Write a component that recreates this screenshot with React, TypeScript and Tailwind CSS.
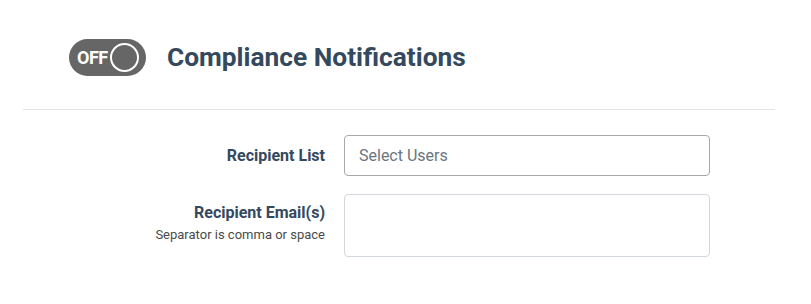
import React from "react";

export default function App() {
  return (
    <div className="w-[811px] h-[304px] bg-white overflow-hidden" style={{ fontFamily: "Roboto, 'Noto Sans', sans-serif" }}>
      <div className="flex items-center pl-[69px] pt-[39px] h-[76px]">
        <div className="relative flex items-center w-[77px] h-[37px] rounded-full bg-[#666666]">
          <span className="ml-[8px] text-white font-bold text-[18px] leading-none tracking-[-0.5px]">OFF</span>
          <span className="ml-[2px] w-[29px] h-[29px] rounded-full border-2 border-white"></span>
        </div>
        <h1 className="ml-[21px] text-[26.3px] font-bold text-[#34495e] leading-none">Compliance Notifications</h1>
      </div>
      <div className="ml-[23px] w-[752px] mt-[33px] border-t border-[#e3e3e3]"></div>
      <div className="mt-[25px] flex flex-col gap-[18px]">
        <div className="flex items-center">
          <div className="w-[325px] text-right text-[16px] font-bold text-[#34495e]">Recipient List</div>
          <div className="ml-[19px] w-[366px] h-[41px] rounded-[4px] border border-[#a9a9a9] flex items-center pl-[14px] text-[16px] text-[#6c757d]">
            Select Users
          </div>
        </div>
        <div className="flex items-start">
          <div className="w-[325px] text-right pt-[9px]">
            <div className="text-[16px] font-bold text-[#34495e] leading-[20px]">Recipient Email(s)</div>
            <div className="mt-[4px] text-[13px] text-[#4a4a4a] leading-[16px]">Separator is comma or space</div>
          </div>
          <div className="ml-[19px] w-[366px] h-[63px] rounded-[4px] border border-[#d3d8de]"></div>
        </div>
      </div>
    </div>
  );
}
